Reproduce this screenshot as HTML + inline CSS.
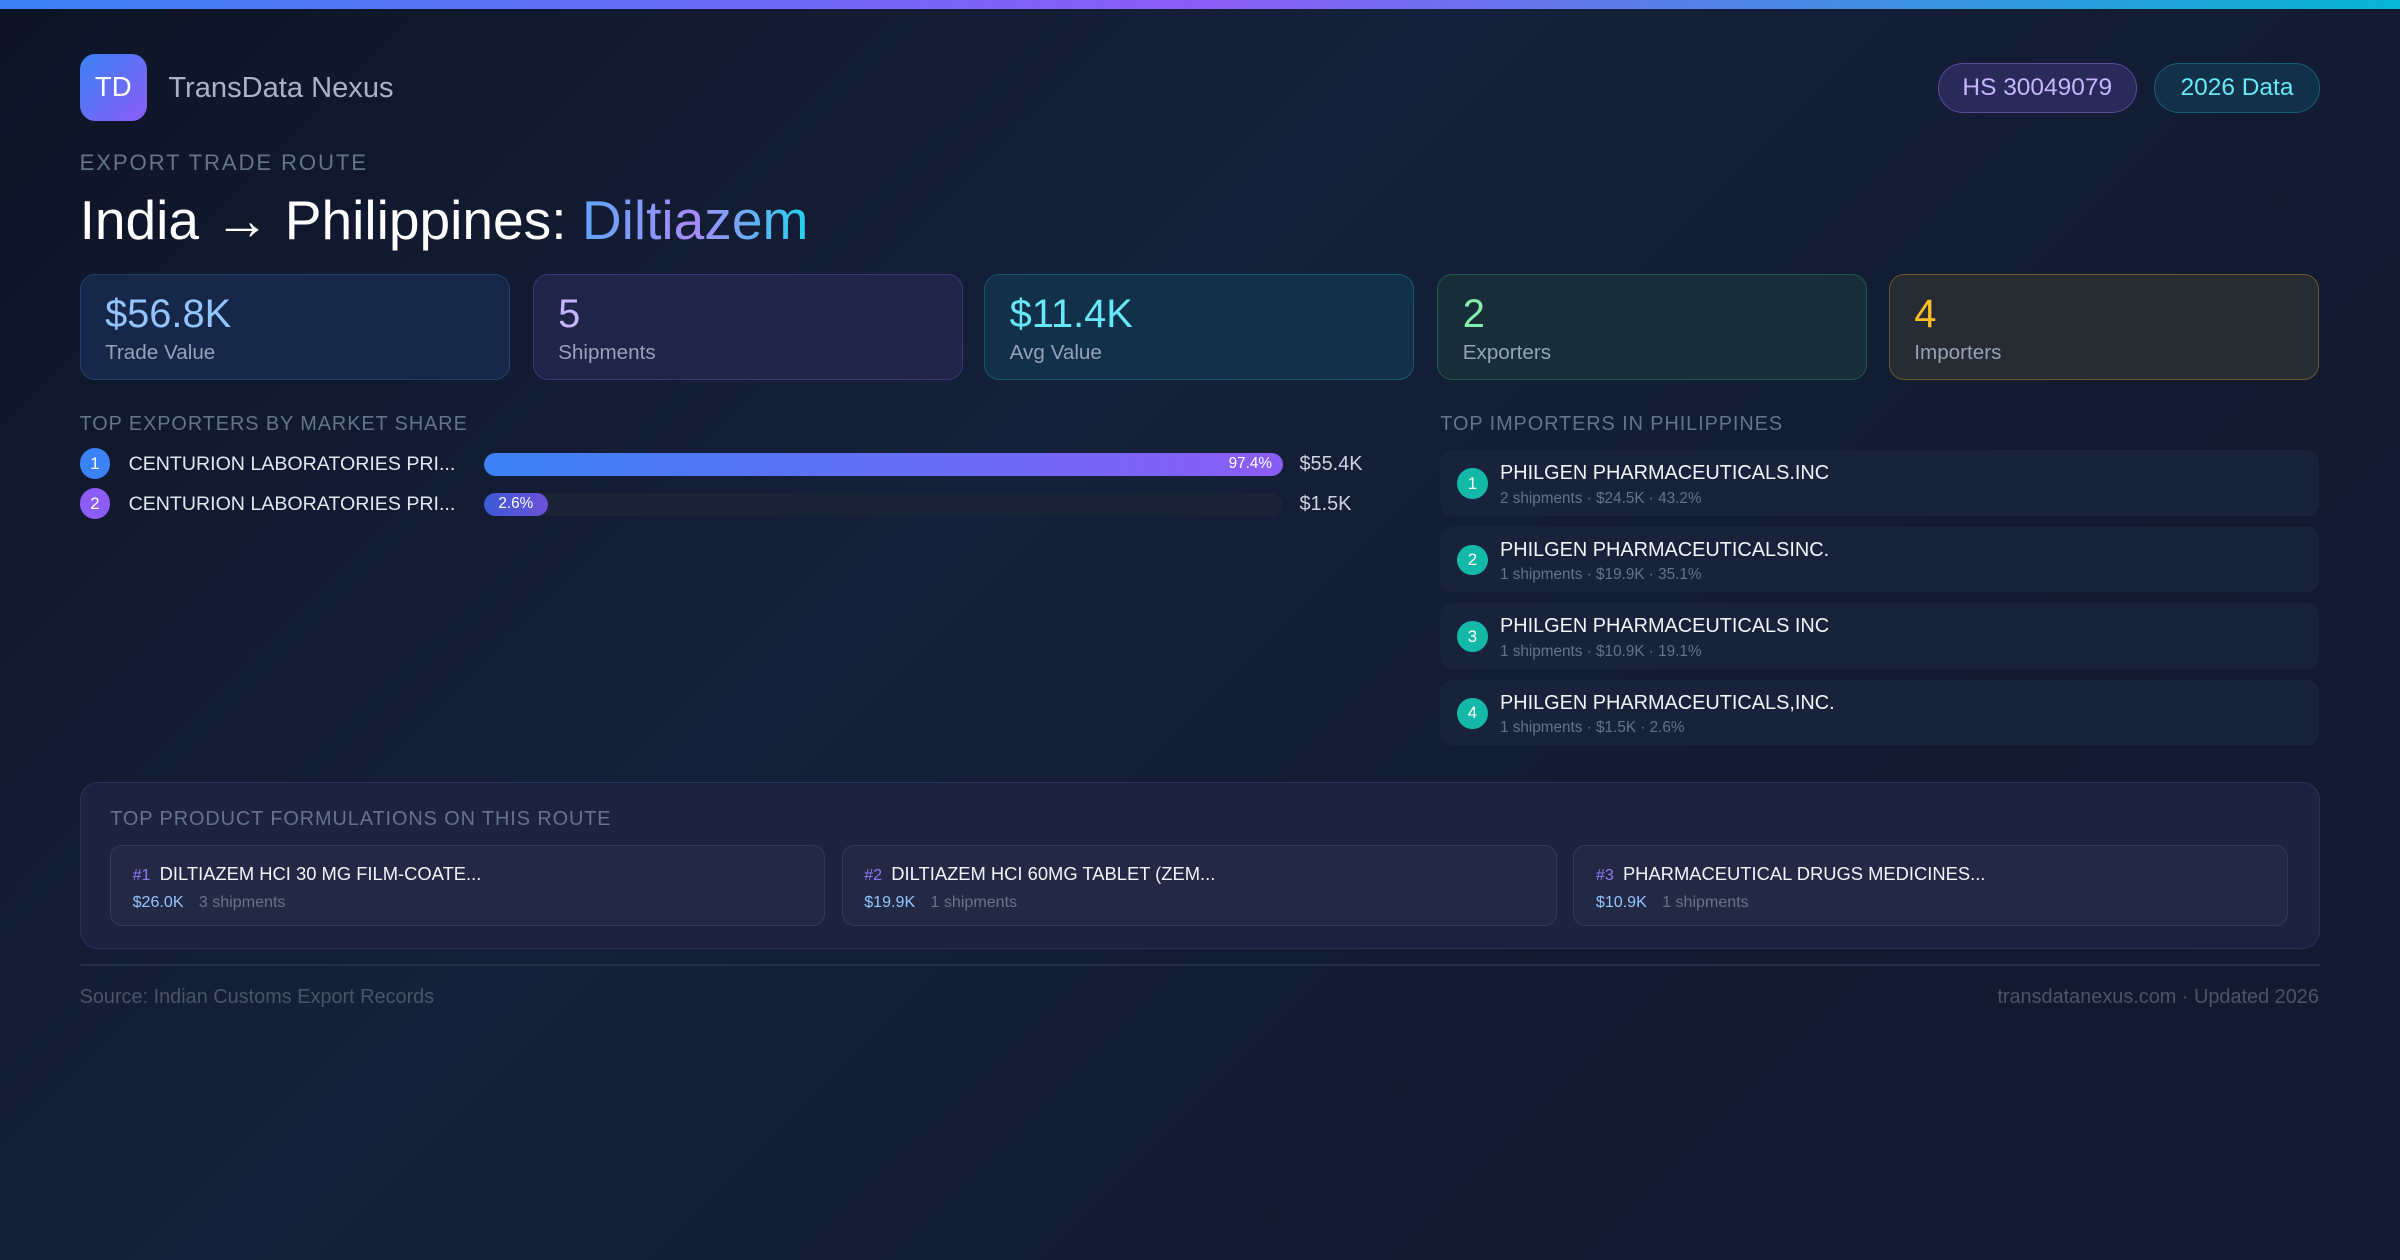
<!DOCTYPE html>
<html><head><meta charset="utf-8"><style>
*{box-sizing:border-box;margin:0;padding:0}
html,body{width:2400px;height:1260px;overflow:hidden;background:#0f1629}
#w{zoom:1.530612;width:1568px;height:823px;position:relative;font-family:"Liberation Sans",sans-serif;color:#e2e8f0;
background:linear-gradient(135deg,#0e1426 0%,#15203a 40%,#111a30 70%,#141a33 100%)}
.a{position:absolute}
.bar{left:0;top:0;width:1568px;height:6px;background:linear-gradient(90deg,#3b82f6,#8b5cf6 50%,#06b6d4)}
.logo{left:52px;top:35px;width:44px;height:44px;border-radius:10px;background:linear-gradient(135deg,#3b82f6,#8b5cf6);color:#fff;font-size:18px;display:flex;align-items:center;justify-content:center}
.pill{top:41px;height:33px;border-radius:17px;font-size:16px;display:flex;align-items:center;justify-content:center}
.card{top:179px;width:281px;height:69px;border-radius:10px;border:1px solid}
.card .v{position:absolute;left:16px;top:11px;font-size:26px}
.card .l{position:absolute;left:16px;top:43px;font-size:13.5px;color:#94a3b8}
.sec{font-size:13px;letter-spacing:0.6px;color:#64748b}
.num{width:20px;height:20px;border-radius:50%;color:#fff;font-size:11px;display:flex;align-items:center;justify-content:center}
.imp{left:941px;width:574px;height:43px;border-radius:8px;background:#18223a}
.imp .num{position:absolute;left:11px;top:12px;background:#14b8a6}
.imp .n{position:absolute;left:39px;top:8px;font-size:13px;color:#f1f5f9}
.imp .s{position:absolute;left:39px;top:26px;font-size:10px;color:#64748b}
.pc{top:552px;width:467px;height:53px;border-radius:8px;background:#232945;border:1px solid #323a5a}
.pc .n{position:absolute;left:14px;top:11px;font-size:12px;color:#f1f5f9}
.pc .n b{font-weight:normal;color:#8b7cf6;font-size:10.5px;margin-right:6px}
.pc .s{position:absolute;left:14px;top:31px;font-size:10.5px;color:#64748b}
.pc .s i{font-style:normal;color:#93c5fd;margin-right:10px}
</style></head><body><div id="w">
<div class="a bar"></div>
<div class="a logo">TD</div>
<div class="a" style="left:110px;top:47px;font-size:19px;color:#a8b3c7">TransData Nexus</div>
<div class="a pill" style="left:1266px;width:130px;background:#2a2a5a;border:1px solid #5b4b9e;color:#c4b5fd">HS 30049079</div>
<div class="a pill" style="left:1407px;width:109px;background:#123048;border:1px solid #17607a;color:#67e8f9">2026 Data</div>
<div class="a" style="left:52px;top:98px;font-size:14.5px;letter-spacing:1.2px;color:#64748b">EXPORT TRADE ROUTE</div>
<div class="a" style="left:52px;top:123px;font-size:36px;color:#fff">India → Philippines: <span style="background:linear-gradient(90deg,#60a5fa,#a78bfa 50%,#22d3ee);-webkit-background-clip:text;color:transparent">Diltiazem</span></div>
<div class="a card" style="left:52px;background:#16274a;border-color:#22406e"><div class="v" style="color:#93c5fd">$56.8K</div><div class="l">Trade Value</div></div>
<div class="a card" style="left:348px;background:#1f2448;border-color:#3b3878"><div class="v" style="color:#c4b5fd">5</div><div class="l">Shipments</div></div>
<div class="a card" style="left:643px;background:#13304a;border-color:#155a70"><div class="v" style="color:#67e8f9">$11.4K</div><div class="l">Avg Value</div></div>
<div class="a card" style="left:939px;background:#172e38;border-color:#1e5a48"><div class="v" style="color:#86efac">2</div><div class="l">Exporters</div></div>
<div class="a card" style="left:1234px;background:#272c32;border-color:#6b5a2a"><div class="v" style="color:#fbbf24">4</div><div class="l">Importers</div></div>
<div class="a sec" style="left:52px;top:270px">TOP EXPORTERS BY MARKET SHARE</div>
<div class="a sec" style="left:941px;top:270px">TOP IMPORTERS IN PHILIPPINES</div>
<div class="a num" style="left:52px;top:293px;background:#3b82f6">1</div>
<div class="a" style="left:84px;top:296px;font-size:12.8px">CENTURION LABORATORIES PRI...</div>
<div class="a" style="left:316px;top:296px;width:522px;height:15px;border-radius:8px;background:#1e293b"><div style="width:100%;height:100%;border-radius:8px;background:linear-gradient(90deg,#3b82f6,#8b5cf6);color:#fff;font-size:10px;text-align:right;padding-right:7px;line-height:15px">97.4%</div></div>
<div class="a" style="left:849px;top:296px;font-size:13px;color:#cbd5e1">$55.4K</div>
<div class="a num" style="left:52px;top:319px;background:#8b5cf6">2</div>
<div class="a" style="left:84px;top:322px;font-size:12.8px">CENTURION LABORATORIES PRI...</div>
<div class="a" style="left:316px;top:322px;width:522px;height:15px;border-radius:8px;background:#1b2437"><div style="width:42px;height:100%;border-radius:8px;background:linear-gradient(90deg,#3b5bd6,#6d50d8);color:#fff;font-size:10px;text-align:center;line-height:15px">2.6%</div></div>
<div class="a" style="left:849px;top:322px;font-size:13px;color:#cbd5e1">$1.5K</div>
<div class="a imp" style="top:294px"><div class="num">1</div><div class="n">PHILGEN PHARMACEUTICALS.INC</div><div class="s">2 shipments · $24.5K · 43.2%</div></div>
<div class="a imp" style="top:344px"><div class="num">2</div><div class="n">PHILGEN PHARMACEUTICALSINC.</div><div class="s">1 shipments · $19.9K · 35.1%</div></div>
<div class="a imp" style="top:394px"><div class="num">3</div><div class="n">PHILGEN PHARMACEUTICALS INC</div><div class="s">1 shipments · $10.9K · 19.1%</div></div>
<div class="a imp" style="top:444px"><div class="num">4</div><div class="n">PHILGEN PHARMACEUTICALS,INC.</div><div class="s">1 shipments · $1.5K · 2.6%</div></div>
<div class="a" style="left:52px;top:511px;width:1464px;height:109px;border-radius:12px;background:#1c2240;border:1px solid #2a3358"></div>
<div class="a sec" style="left:72px;top:528px">TOP PRODUCT FORMULATIONS ON THIS ROUTE</div>
<div class="a pc" style="left:72px"><div class="n"><b>#1</b>DILTIAZEM HCI 30 MG FILM-COATE...</div><div class="s"><i>$26.0K</i>3 shipments</div></div>
<div class="a pc" style="left:550px"><div class="n"><b>#2</b>DILTIAZEM HCI 60MG TABLET (ZEM...</div><div class="s"><i>$19.9K</i>1 shipments</div></div>
<div class="a pc" style="left:1028px"><div class="n"><b>#3</b>PHARMACEUTICAL DRUGS MEDICINES...</div><div class="s"><i>$10.9K</i>1 shipments</div></div>
<div class="a" style="left:52px;top:630px;width:1464px;height:1px;background:#263048"></div>
<div class="a" style="left:52px;top:644px;font-size:13px;color:#4b5568">Source: Indian Customs Export Records</div>
<div class="a" style="right:53px;top:644px;font-size:13px;color:#4b5568">transdatanexus.com · Updated 2026</div>
</div></body></html>
